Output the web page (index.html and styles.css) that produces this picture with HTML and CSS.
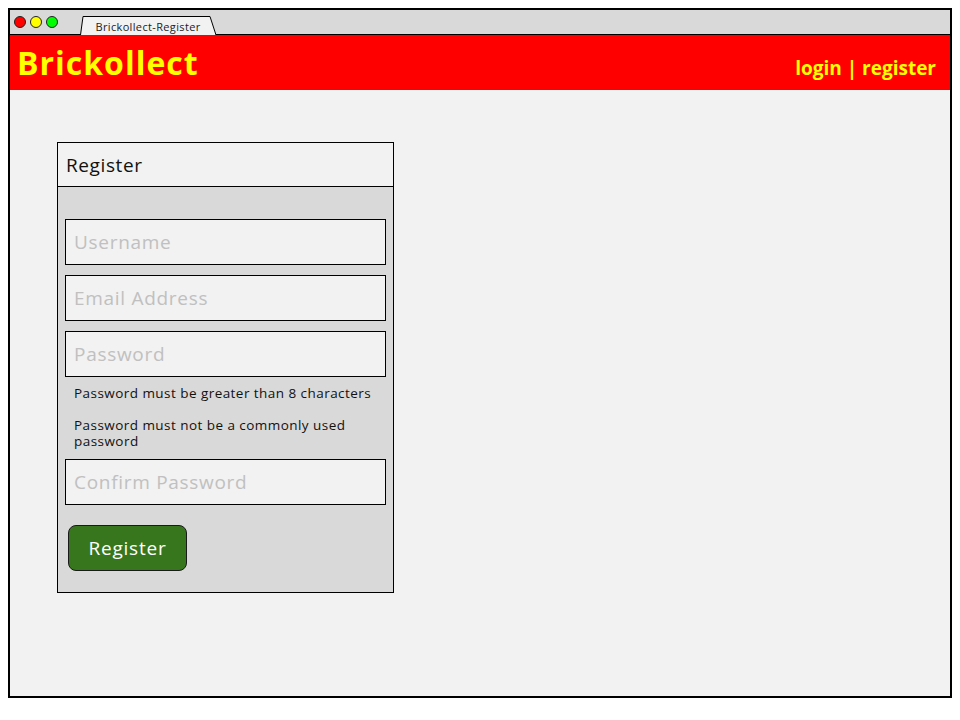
FILE: index.html
```html
<!DOCTYPE html>
<html>
<head>
<meta charset="utf-8">
<title>Brickollect-Register</title>
<link rel="stylesheet" href="styles.css">
</head>
<body>
<div class="window">
  <div class="tabbar">
    <span class="dot dot-red"></span>
    <span class="dot dot-yellow"></span>
    <span class="dot dot-green"></span>
    <div class="tab">
      <svg class="tab-shape" width="136" height="19" viewBox="0 0 136 19"><path d="M0.5 19 L3 0.5 L130 0.5 L136 19" fill="#f2f2f2" stroke="#000" stroke-width="1"/></svg>
      <span class="tab-label">Brickollect-Register</span>
    </div>
  </div>
  <header class="topbar">
    <div class="brand">Brickollect</div>
    <nav class="auth">login | register</nav>
  </header>
  <main class="content">
    <section class="card">
      <div class="card-head">Register</div>
      <div class="card-body">
        <div class="field">Username</div>
        <div class="field">Email Address</div>
        <div class="field">Password</div>
        <p class="hint hint-first">Password must be greater than 8 characters</p>
        <p class="hint">Password must not be a commonly used password</p>
        <div class="field">Confirm Password</div>
        <button class="btn">Register</button>
      </div>
    </section>
  </main>
</div>
</body>
</html>
```
FILE: styles.css
```css
* { box-sizing: border-box; }
html, body { margin: 0; padding: 0; background: #fff; }
body { font-family: "Open Sans", "DejaVu Sans", sans-serif; }

.window {
  margin: 8px 0 0 8px;
  width: 944px;
  height: 690px;
  border: 2px solid #000;
  display: flex;
  flex-direction: column;
  background: #f2f2f2;
}

.tabbar {
  height: 25px;
  background: #d9d9d9;
  border-bottom: 1px solid #000;
  display: flex;
  align-items: center;
  padding-left: 4px;
  gap: 4px;
}
.dot {
  width: 12px;
  height: 12px;
  border-radius: 50%;
  border: 1px solid #222;
  flex: none;
}
.dot-red { background: #ff0000; }
.dot-yellow { background: #ffff00; }
.dot-green { background: #00ff00; }

.tab {
  position: relative;
  align-self: flex-end;
  margin-left: 18px;
  width: 136px;
  height: 19px;
  margin-bottom: -1px;
  display: flex;
  align-items: center;
  justify-content: center;
}
.tab-shape { position: absolute; left: 0; top: 0; }
.tab-label {
  position: relative;
  font-size: 11px;
  letter-spacing: 0.35px;
  color: #222;
  padding-top: 1px;
}

.topbar {
  height: 55px;
  background: #ff0000;
  display: flex;
  align-items: center;
  justify-content: space-between;
  padding: 0 14px 0 8px;
}
.brand {
  color: #ffff00;
  font-weight: 700;
  font-size: 32px;
  letter-spacing: 1px;
  margin-left: -1px;
}
.auth {
  color: #ffff00;
  font-weight: 700;
  font-size: 19px;
  padding-top: 10px;
}

.content {
  flex: 1;
  padding: 52px 0 0 47px;
}

.card {
  width: 337px;
  border: 1px solid #000;
  background: #d9d9d9;
}
.card-head {
  height: 44px;
  background: #f2f2f2;
  border-bottom: 1px solid #000;
  padding-left: 8px;
  display: flex;
  align-items: center;
  font-size: 19px;
  letter-spacing: 0.6px;
  color: #111;
}
.card-body {
  padding: 32px 7px 21px 7px;
  display: flex;
  flex-direction: column;
  align-items: flex-start;
}
.field {
  width: 321px;
  height: 46px;
  border: 1px solid #000;
  background: #f2f2f2;
  color: #c0c0c0;
  font-size: 19px;
  letter-spacing: 0.7px;
  display: flex;
  align-items: center;
  padding-left: 8px;
  margin-bottom: 10px;
}
.hint {
  margin: 0 0 10px 0;
  padding: 0 0 0 9px;
  width: 310px;
  font-size: 13.5px;
  letter-spacing: 0.45px;
  line-height: 16px;
  color: #111;
}
.hint-first { margin-top: -2px; margin-bottom: 16px; }
.btn {
  margin: 10px 0 0 3px;
  width: 119px;
  height: 46px;
  border: 1px solid #1a1a1a;
  border-radius: 8px;
  background: #38761d;
  color: #fff;
  font-family: inherit;
  font-size: 19px;
  letter-spacing: 0.8px;
}
```
